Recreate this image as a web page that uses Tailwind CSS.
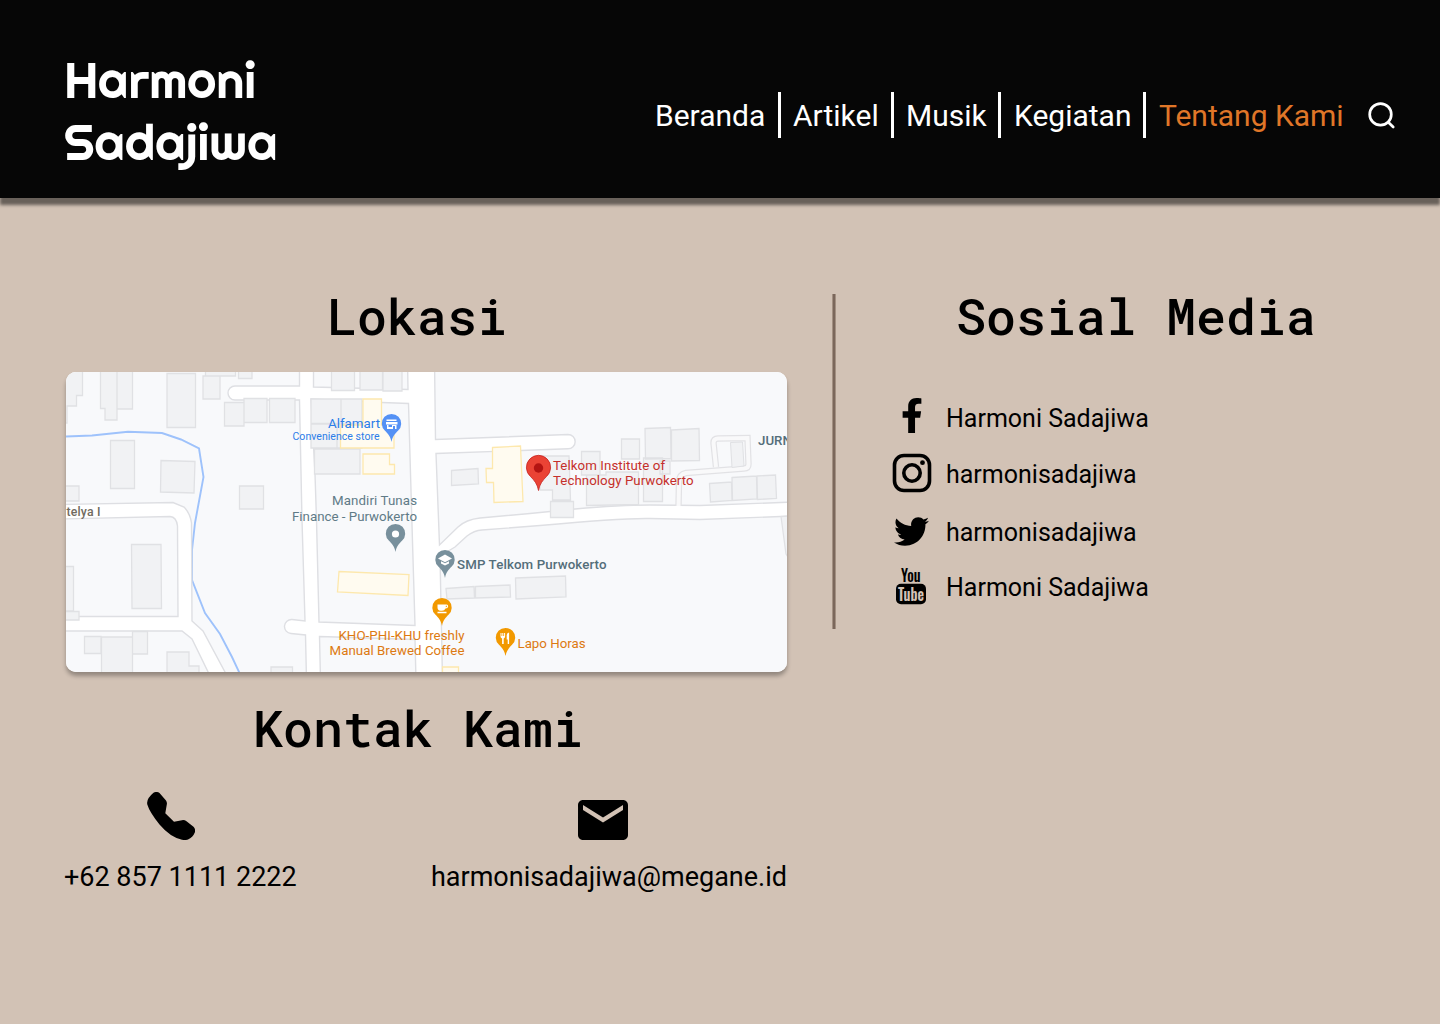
<!DOCTYPE html>
<html lang="id">
<head>
<meta charset="utf-8">
<title>Harmoni Sadajiwa - Tentang Kami</title>
<script src="https://cdn.jsdelivr.net/npm/@tailwindcss/browser@4"></script>
</head>
<body class="h-[1024px] w-[1440px] overflow-hidden bg-[#d2c2b5] font-['Roboto',sans-serif] text-black">
<header class="flex h-[198px] justify-between bg-[#060606] pl-[64px] text-white shadow-[0_7px_3px_rgba(0,0,0,0.5)]">
  <div class="pt-[49px] font-['Righteous','Inter',sans-serif] text-[50px] leading-[62px] whitespace-nowrap">
    <div>Harmoni</div>
    <div>Sadajiwa</div>
  </div>
  <nav class="mt-[92px] mr-[42px] flex h-[46px] items-center text-[30px] whitespace-nowrap">
    <a class="w-[123px]">Beranda</a>
    <span class="h-full w-[3px] bg-white"></span>
    <a class="w-[110px] pl-3">Artikel</a>
    <span class="h-full w-[3px] bg-white"></span>
    <a class="w-[104px] pl-3">Musik</a>
    <span class="h-full w-[3px] bg-white"></span>
    <a class="w-[142px] pl-[13px]">Kegiatan</a>
    <span class="h-full w-[3px] bg-white"></span>
    <a class="w-[219px] pl-[13px] text-[#e07628]">Tentang Kami</a>
    <svg class="size-[33px]" viewBox="0 0 33 33" fill="none" stroke="#fff" stroke-width="2.7" stroke-linecap="round"><circle cx="15.5" cy="15.400" r="10.800"/><path d="M23.300 23.200l4.900 4.800"/></svg>
  </nav>
</header>
<main class="flex pl-[66px]">
  <section class="w-[721px] pt-[85px]">
    <h2 class="h-[66px] pr-[19px] text-center font-['Roboto_Mono','DejaVu_Sans_Mono',monospace] text-[50px] leading-[66px] font-medium">Lokasi</h2>
    <svg class="mt-[23px] block h-[300px] w-[721px] rounded-[10px] shadow-[0_4px_4px_rgba(0,0,0,0.3)]" viewBox="66 372 721 300" font-family="Roboto, sans-serif" font-size="13">
      <defs>
        <path id="pin" d="M0 18C-1.200 12-3.600 9.800-6.500 6.800A9.700 9.700 0 1 1 6.500 6.800C3.600 9.800 1.200 12 0 18Z"/>
      </defs>
      <path fill="#fff" d="M66 372h721v300H66z"/>
      <g fill="#f8f9fb" stroke="#dedfe3" stroke-width="1.400">
        <path d="M60 360H299.500V386H235a7 7 0 0 0 0 14H299.500L302 520 305 621 292 619.500a7 7 0 0 0-1 14L305.500 635 306.500 680H60Z"/>
        <path d="M313.500 360V387L408 389.500 407.500 360Z"/>
        <path d="M311 399L382 402.500 408.500 403.500 412 525 415 625.500 319 622 316.500 520 315 474Z"/>
        <path d="M319.500 636.500L415 639.500 416 680H320.500Z"/>
        <path d="M434.500 360L435.500 439.500 568 434.500a7.100 7.100 0 0 1 0 14.300L436 453.500 439.500 545 458 527Q466 519.500 480 518L530 513.500 575 509Q620 505 650 505T700 505.500L795 502V360Z"/>
        <path d="M440 556L455 547 467 536Q474 530.500 482 530L540 525.500Q620 518 650 518.500T700 519.500L795 516V680H442.500Z"/>
      </g>
      <path fill="none" stroke="#9ec2fb" stroke-width="1.900" d="M66 436.500L92 435.500 128 431.800 162 433 181 439.500 199 448.500 203.500 477 195 523 192 550V580L205 613 220 634 232 657 239.500 673"/>
      <path fill="#fff" stroke="#dedfe3" stroke-width="1.400" d="M60 504.500L173 502.500 184 507Q190 513 191.500 523L192 621 203 631 225 672 229 680H212L192 639 182 631H60V616.500H178L177.500 526Q176.500 517 170 516.500L60 519Z"/>
      <g fill="#f1f2f4" stroke="#e0e1e4" stroke-width="1.300">
        <path d="M60 423H67V406H76.500V395.500H82.500V365H60ZM100.500 365V408.500H105V420H117V365ZM117 365H132.500V409H117ZM167 373.500H195.500V427.500H167ZM203 376H220V399H203ZM205.500 365H235.500V376H205.500ZM238.500 365H252V378.500H238.500ZM224.500 402.500H244V426H224.500ZM244 398.500H267V422.500H244ZM269.500 398.500H295V422.500H269.500ZM110.500 440.500H134.500V488.500H110.500ZM161 460.500L195 461.500 194 493 160.500 492ZM60 486H79V501H60ZM239.500 486H263.500V509H239.500ZM60 566.500H73.500V611H60ZM131.500 544.500H161L161.500 608.500H132ZM60 611.500H79V620H60ZM84.500 636.500H101V653.500H84.500ZM101.500 637H132.500V680H101.500ZM132.500 631.500H147.500V654H132.500ZM167 652H189V666H199V680H167ZM271 667H292.500V680H271Z"/>
        <path d="M331.500 365H354.500V390.500H331.500ZM360 365H382.500V390H360ZM383 365H402V391H383ZM311 399H341V423.500H311ZM341 399H362V424H341ZM311 424H337V448H311ZM337 424H362V448H337ZM314.500 449H360V474H314.500Z"/>
        <path d="M451.500 470.500L478 468.500 478.500 484 451.500 485.500ZM540 456H569L570.500 500H552.500V490H540ZM581.500 451.500H600V475H581.500ZM586.500 475H606V472H638.500V504.500L586.500 505.500ZM621.500 439H639.500V459H621.500ZM643.500 458H662.500V501.500H643.500ZM660 461H670V474H660ZM645 428.500L670.500 427.500 671 458.500 645.500 459ZM671.500 430L699 428.500 699.500 460.500 671.500 461ZM709.500 483.500L731.500 482 732 500.500 710.500 502ZM732 477.500L756.500 476 757 499 732.500 500.500ZM757 476L775.500 475 776.500 498.500 757.500 499.500ZM550.500 501.500H573.500V517.500H550.500ZM446 588.500L474 586.500 474.500 598 447 599ZM475.500 586.500L510 585 510.500 597 475.500 598ZM515.500 578L565.500 576 566 597 516 599ZM781 516.500L786 554 790 560V516Z"/>
      </g>
      <g fill="none"><path stroke="#e2e2e5" stroke-width="6.400" d="M716 467L713.500 443Q713.500 438.500 718 438.500L747.500 438 748.500 464Q748.500 468.500 744 468.500L686 473Q679 474.500 679 482L678.500 506"/><path stroke="#f9f9fa" stroke-width="4" d="M716 467L713.500 443Q713.500 438.500 718 438.500L747.500 438 748.500 464Q748.500 468.500 744 468.500L686 473Q679 474.500 679 482L678.500 506"/></g>
      <path fill="#f1f2f4" stroke="#e0e1e4" d="M730.500 442.500L742.500 442 744 466 732 467.500Z"/>
      <g fill="#fffbf0" stroke="#fde8ad" stroke-width="1.300">
        <path d="M363 399H381.500V425H394V448H340.500V425H363ZM363 454H389.500V464.500H394.500V474H363ZM339 571.500L409 574.500 408 595.500 337.500 592ZM492.500 447.500L520.500 446 523 501.500 494 502.500 493.500 482.500H486.500L486 468.500H492.500ZM442.500 667H458.500V680H442.500Z"/>
      </g>
      <g transform="translate(391.500 424)"><use href="#pin" fill="#5491f5"/><path fill="#fff" d="M-5-4.500H5V-3H-5ZM-5.500-2H6V.5H-5.500ZM-4.500 1H-3V3H.5V1H5V5H3.500V2H1.500V5H-4.500Z"/></g>
      <g transform="translate(395.500 534)"><use href="#pin" fill="#78909c"/><circle r="3.600" fill="#fff"/></g>
      <g transform="translate(445 560)"><use href="#pin" fill="#78909c"/><path fill="#fff" d="M0-5.500L7-1.500 0 2.200-7-1.500ZM-4 1.200L0 3.300 4 1.200V3.600L0 5.600-4 3.600Z"/></g>
      <g transform="translate(442 608)"><use href="#pin" fill="#f29900"/><path fill="#fff" d="M-4.500 3.800H4.500V5.200H-4.500ZM-4.500-3.500H4.500Q6.300-3.500 6.200-1.500 6 .5 3.500.5 2.500 2.800 0 2.800H-1.500Q-4.500 2.500-4.500-.5ZM3.800-2.300V-.7Q5-.7 5-2.300Z"/></g>
      <g transform="translate(505.500 638)"><use href="#pin" fill="#f29900"/><path fill="#fff" d="M-5-5H-4V-2H-3.200V-5H-2.200V-2H-1.400V-5H-.4V-1.500Q-.5 0-1.800.5V6H-3.400V.5Q-5 0-5-1.500ZM1.200-3Q1.500-5.500 3.600-5.500V6H2.200V1.500H1.200Z"/></g>
      <path fill="#ea4335" stroke="#c5221f" stroke-width=".8" d="M538.500 490.500C537.500 484 534 480 530.500 476.500A12.100 12.100 0 1 1 546.500 476.500C543 480 539.500 484 538.500 490.500Z"/>
      <circle cx="538.500" cy="468" r="4.700" fill="#b31412"/>
      <g fill="#2b7de9"><text x="328" y="427.500" font-size="13.300" textLength="52">Alfamart</text><text x="292.500" y="440" font-size="10.500" textLength="87">Convenience store</text></g>
      <g fill="#5f7b87" font-size="13.300"><text x="332" y="505" textLength="85">Mandiri Tunas</text><text x="292" y="520.500" textLength="125">Finance - Purwokerto</text>
      <g font-weight="500" fill="#546e7a"><text x="457" y="569" textLength="149.500">SMP Telkom Purwokerto</text><text x="758" y="444.500">JURN</text></g></g>
      <text x="66.500" y="515.500" font-weight="500" font-size="12.300" fill="#716b5f" textLength="34">telya I</text>
      <g fill="#dd7a12" font-size="13.300"><text x="338.500" y="640" textLength="126">KHO-PHI-KHU freshly</text><text x="329.500" y="655" textLength="135">Manual Brewed Coffee</text><text x="517.500" y="647.500" textLength="68">Lapo Horas</text></g>
      <g fill="#c5302b" font-size="13.300"><text x="553" y="469.500" textLength="112">Telkom Institute of</text><text x="553" y="485" textLength="140.500">Technology Purwokerto</text></g>
    </svg>
    <h2 class="mt-[23px] h-[66px] pr-[17px] text-center font-['Roboto_Mono','DejaVu_Sans_Mono',monospace] text-[50px] leading-[66px] font-medium">Kontak Kami</h2>
    <div class="mt-[31px] -ml-[2px] flex justify-between text-[27px] leading-8 whitespace-nowrap">
      <div class="flex flex-col items-start">
        <svg class="ml-[83px] h-[48px] w-[48px]" viewBox="147 792 48 48"><path d="M153.500 792.800Q156.500 791 159.500 793L166 800.500Q167.300 802.500 166.800 804.500L165.300 813.300 174 821.700 182 820.200Q184.500 819.800 186.500 821.200L193.500 826.800Q195.800 829 194.800 832.500 193 837 188.500 839.300 186 840.500 182 839.800 170 837 159.500 824.500 149.500 812 147.300 804.500 146 799 153.500 792.800Z"/></svg>
        <span class="mt-[21px]">+62 857 1111 2222</span>
      </div>
      <div class="flex flex-col items-start">
        <svg class="mt-2 ml-[147px] h-[40px] w-[50px]" viewBox="2 4 20 16"><path d="M20 4H4c-1.100 0-1.990.9-1.990 2L2 18c0 1.100.9 2 2 2h16c1.100 0 2-.9 2-2V6c0-1.100-.9-2-2-2zm0 4l-8 5-8-5V6l8 5 8-5v2z"/></svg>
        <span class="mt-[21px]">harmonisadajiwa@megane.id</span>
      </div>
    </div>
  </section>
  <div class="mt-[96px] ml-[45px] h-[335px] w-[4px] border-x border-[#a39082] bg-[#7b675b]"></div>
  <section class="ml-[56px] w-[490px] pt-[85px]">
    <h2 class="h-[66px] pl-[64px] font-['Roboto_Mono','DejaVu_Sans_Mono',monospace] text-[50px] leading-[66px] font-medium">Sosial Media</h2>
    <ul class="mt-[42px] text-[25px] whitespace-nowrap">
      <li class="flex h-[56px] items-center"><span class="flex w-[54px]"><svg class="-mt-[7px] ml-[9px] h-[35px] w-[22px]" viewBox="0 0 320 512"><path d="M279.140 288l14.220-92.660h-88.910v-60.130c0-25.350 12.420-50.060 52.240-50.060h40.420V6.260S260.430 0 225.360 0c-73.220 0-121.080 44.380-121.080 124.720v70.620H22.890V288h81.390v224h100.170V288z"/></svg></span>Harmoni Sadajiwa</li>
      <li class="flex h-[56px] items-center"><span class="flex w-[54px]"><svg class="-mt-[5px] size-[40px]" viewBox="0 0 40 40" fill="none" stroke="#000"><rect x="2.500" y="2.500" width="35" height="35" rx="9.500" stroke-width="3.600"/><circle cx="20" cy="20" r="8.200" stroke-width="3.600"/><circle cx="30.500" cy="9.700" r="2.400" fill="#000" stroke="none"/></svg></span>harmonisadajiwa</li>
      <li class="flex h-[59px] items-center"><span class="flex w-[54px]"><svg class="-mt-[3px] ml-[2px] size-[35px]" viewBox="0 0 512 512"><path d="M459.370 151.716c.325 4.548.325 9.097.325 13.645 0 138.720-105.583 298.558-298.558 298.558-59.452 0-114.680-17.219-161.137-47.106 8.447.974 16.568 1.299 25.340 1.299 49.055 0 94.213-16.568 130.274-44.832-46.132-.975-84.792-31.188-98.112-72.772 6.498.974 12.995 1.624 19.818 1.624 9.421 0 18.843-1.300 27.614-3.573-48.081-9.747-84.143-51.980-84.143-102.985v-1.299c13.969 7.797 30.214 12.670 47.431 13.319-28.264-18.843-46.781-51.005-46.781-87.391 0-19.492 5.197-37.360 14.294-52.954 51.655 63.675 129.300 105.258 216.365 109.807-1.624-7.797-2.599-15.918-2.599-24.040 0-57.828 46.782-104.934 104.934-104.934 30.213 0 57.502 12.670 76.670 33.137 23.715-4.548 46.456-13.320 66.599-25.340-7.798 24.366-24.366 44.833-46.132 57.827 21.117-2.273 41.584-8.122 60.426-16.243-14.292 20.791-32.161 39.308-52.628 54.253z"/></svg></span>harmonisadajiwa</li>
      <li class="flex h-[52px] items-center"><span class="flex w-[54px]"><svg class="-mt-[3px] ml-[3px] h-[38px] w-[32px] overflow-visible" viewBox="0 0 32 38" font-family="Oswald, Roboto, sans-serif"><text x="6" y="13.500" font-size="17" font-weight="500" textLength="19.500" lengthAdjust="spacingAndGlyphs">You</text><rect x="1" y="15.800" width="30" height="20.500" rx="5"/><text x="3" y="32.800" font-size="17" font-weight="600" fill="#d2c2b5" textLength="26" lengthAdjust="spacingAndGlyphs">Tube</text></svg></span>Harmoni Sadajiwa</li>
    </ul>
  </section>
</main>
</body>
</html>
